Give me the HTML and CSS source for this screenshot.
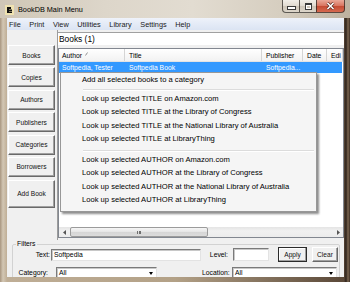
FILE: index.html
```html
<!DOCTYPE html>
<html lang="en">
<head>
    <meta charset="UTF-8">
    <meta name="viewport" content="width=device-width, initial-scale=1.0">
    <title>BookDB Main Menu</title>
    <link rel="stylesheet" href="styles.css">
</head>
<body>
<div class="window">
    <div class="titlebar">
        <svg class="app-icon" width="9" height="10" viewBox="0 0 9 10">
            <rect x="0" y="0" width="9" height="10" fill="#efe2b0"/>
            <rect x="2" y="2" width="2" height="6" fill="#111"/>
            <rect x="4" y="2" width="2" height="2" fill="#111"/>
            <rect x="4" y="4.5" width="3" height="1.5" fill="#111"/>
            <rect x="4" y="6.5" width="3" height="1.5" fill="#111"/>
        </svg>
        <span class="title">BookDB Main Menu</span>
        <div class="controls">
            <div class="ctl ctl-min"><span class="glyph-min"></span></div>
            <div class="ctl ctl-max"><span class="glyph-max"></span></div>
            <div class="ctl ctl-close">
                <svg width="9" height="8" viewBox="0 0 9 8">
                    <path d="M1.5 1 L7.5 7 M7.5 1 L1.5 7" stroke="#5a2a20" stroke-width="3"/>
                    <path d="M1.5 1 L7.5 7 M7.5 1 L1.5 7" stroke="#fff" stroke-width="1.6"/>
                </svg>
            </div>
        </div>
    </div>

    <div class="frame">
        <div class="menubar">
            <span>File</span>
            <span>Print</span>
            <span>View</span>
            <span>Utilities</span>
            <span>Library</span>
            <span>Settings</span>
            <span>Help</span>
        </div>

        <div class="client">
            <div class="main">
                <div class="side">
                    <button class="side-btn">Books</button>
                    <button class="side-btn">Copies</button>
                    <button class="side-btn">Authors</button>
                    <button class="side-btn">Publishers</button>
                    <button class="side-btn">Categories</button>
                    <button class="side-btn">Borrowers</button>
                    <button class="side-btn tall">Add Book</button>
                </div>

                <div class="pane">
                    <div class="caption">Books (1)</div>
                    <div class="list">
                        <div class="list-head">
                            <div class="col c-author">Author <svg class="sort" width="3" height="4" viewBox="0 0 3 4"><path d="M0.5 3.5 L2.5 0.5" stroke="#777" stroke-width="0.8"/></svg></div>
                            <div class="col c-title">Title</div>
                            <div class="col c-pub">Publisher</div>
                            <div class="col c-date">Date</div>
                            <div class="col c-edi">Edi</div>
                        </div>
                        <div class="row selected">
                            <div class="col c-author">Softpedia, Tester</div>
                            <div class="col c-title">Softpedia Book</div>
                            <div class="col c-pub">Softpedia...</div>
                            <div class="col c-date"></div>
                            <div class="col c-edi"></div>
                        </div>
                        <div class="list-body"></div>
                        <div class="hscroll">
                            <div class="sb-arrow"><svg width="3" height="5" viewBox="0 0 3 5"><path d="M3 0 L0 2.5 L3 5 Z" fill="#555"/></svg></div>
                            <div class="sb-thumb"><span class="grip"></span></div>
                            <div class="sb-track"></div>
                            <div class="sb-arrow"><svg width="3" height="5" viewBox="0 0 3 5"><path d="M0 0 L3 2.5 L0 5 Z" fill="#555"/></svg></div>
                        </div>
                    </div>
                </div>
            </div>

            <fieldset class="filters">
                <legend>Filters</legend>
                <div class="f-row">
                    <label class="lbl lbl-text">Text:</label>
                    <div class="field f-text">Softpedia</div>
                    <label class="lbl lbl-level">Level:</label>
                    <div class="field f-level"></div>
                    <button class="btn btn-apply">Apply</button>
                    <button class="btn btn-clear">Clear</button>
                </div>
                <div class="f-row row2">
                    <label class="lbl lbl-cat">Category:</label>
                    <div class="field combo f-cat">All<span class="drop"></span></div>
                    <label class="lbl lbl-loc">Location:</label>
                    <div class="field combo f-loc">All<span class="drop"></span></div>
                </div>
            </fieldset>
        </div>
    </div>

    <ul class="ctx-menu">
        <li>Add all selected books to a category</li>
        <li class="sep"></li>
        <li>Look up selected TITLE on Amazon.com</li>
        <li>Look up selected TITLE at the Library of Congress</li>
        <li>Look up selected TITLE at the National Library of Australia</li>
        <li>Look up selected TITLE at LibraryThing</li>
        <li class="sep sep-wide"></li>
        <li>Look up selected AUTHOR on Amazon.com</li>
        <li>Look up selected AUTHOR at the Library of Congress</li>
        <li>Look up selected AUTHOR at the National Library of Australia</li>
        <li>Look up selected AUTHOR at LibraryThing</li>
    </ul>
</div>
</body>
</html>
```

FILE: styles.css
```css
body {
    margin: 0;
    width: 350px;
    height: 282px;
    overflow: hidden;
    font-family: "Liberation Sans", Arial, sans-serif;
    color: #000;
}

.window {
    position: relative;
    height: 282px;
}

/* title bar */
.titlebar {
    height: 18px;
    display: flex;
    align-items: center;
    padding-left: 5px;
    background: linear-gradient(90deg, #cfc6b6 0, #ddd6ca 30%, #e2dcd1 55%, #d6cec0 80%, #bdb19f 100%);
}

.app-icon {
    margin-right: 4px;
    margin-top: 1px;
}

.title {
    font-size: 7.3px;
    margin-top: 1px;
}

.controls {
    margin-left: auto;
    margin-right: 5px;
    align-self: flex-start;
    display: flex;
}

.ctl {
    height: 13px;
    box-sizing: border-box;
    border: 1px solid rgba(45, 40, 35, 0.75);
    border-top: none;
    display: flex;
    align-items: center;
    justify-content: center;
    background: linear-gradient(#f1eee8, #e0dad0 50%, #cdc5b8 51%, #ddd6ca);
}

.ctl-min {
    width: 17px;
    border-right: none;
    border-radius: 0 0 0 4px;
}

.ctl-max {
    width: 17px;
    border-right: none;
}

.ctl-close {
    width: 29px;
    border-radius: 0 0 4px 0;
    background: linear-gradient(#eaa898, #d8735e 50%, #c44a32 51%, #d66a50);
}

.glyph-min {
    width: 7px;
    height: 2px;
    background: #fff;
    border: 1px solid #3a3a3a;
    margin-top: 4px;
}

.glyph-max {
    width: 5px;
    height: 4px;
    border: 1px solid #3a3a3a;
    border-top-width: 2px;
    box-shadow: inset 0 0 0 1px #fff;
}

/* frame around menu + client */
.frame {
    height: 264px;
    padding: 0 6px 5px 7px;
    box-sizing: border-box;
    background: linear-gradient(90deg, #a89680 0, #d3c7b4 3px, #bfae96 7px, #b3a187 50%, #5a4838 344px, #2e231b 346px, #7b6651 348px, #3b2d23 350px);
}

.menubar {
    height: 12px;
    display: flex;
    align-items: center;
    gap: 8.6px;
    padding-left: 2px;
    font-size: 7.3px;
    color: #1a1a1a;
    background: linear-gradient(#eef2fa, #dbe4f3);
}

.client {
    height: 247px;
    background: #f0f0f0;
    overflow: hidden;
}

.main {
    display: flex;
    height: 210px;
}

/* left button column */
.side {
    width: 50px;
    padding: 15px 0 0 1px;
    box-sizing: border-box;
    display: flex;
    flex-direction: column;
    gap: 2.4px;
}

.side-btn, .btn {
    font-family: "Liberation Sans", Arial, sans-serif;
    font-size: 6.6px;
    color: #111;
    background: #f0f0f0;
    border: 1px solid;
    border-color: #fff #696969 #696969 #fff;
    box-shadow: inset -1px -1px 0 #a0a0a0;
    padding: 0;
    margin: 0;
}

.side-btn {
    width: 47px;
    height: 20px;
}

.side-btn.tall {
    height: 28px;
    margin-top: 0.6px;
}

/* right pane */
.pane {
    flex: 1;
    border-left: 1px solid #9c9c9c;
    padding-top: 2px;
    display: flex;
    flex-direction: column;
}

.caption {
    height: 13px;
    box-sizing: border-box;
    background: #fff;
    border-top: 1px solid #a0a0a0;
    font-size: 8.4px;
    line-height: 12px;
    padding-left: 1px;
}

.list {
    margin-top: 3px;
    height: 190px;
    box-sizing: border-box;
    border: 1px solid #828790;
    background: #fff;
    display: flex;
    flex-direction: column;
}

.list-head {
    display: flex;
    height: 13px;
    box-sizing: border-box;
    border-bottom: 1px solid #e3e3e3;
    background: linear-gradient(#fff, #f2f2f2);
    font-size: 6.8px;
}

.col {
    box-sizing: border-box;
    padding-left: 4px;
    white-space: nowrap;
    overflow: hidden;
    display: flex;
    align-items: center;
}

.list-head .col {
    border-right: 1px solid #d5d5d5;
}

.c-author { width: 66px; padding-left: 3px; }
.c-title { width: 137px; }
.c-pub { width: 41px; }
.c-date { width: 24px; }
.c-edi { flex: 1; }

.sort {
    margin-left: 3px;
    margin-bottom: 2px;
}

.row {
    display: flex;
    height: 11px;
    font-size: 6.8px;
}

.row.selected {
    background: #3399ff;
    color: #fff;
    margin-right: 1px;
}

.list-body {
    flex: 1;
}

.hscroll {
    height: 10px;
    display: flex;
    background: linear-gradient(#e4e4e4, #f1f1f1 40%, #ececec);
}

.sb-arrow {
    width: 10px;
    display: flex;
    align-items: center;
    justify-content: center;
}

.sb-thumb {
    width: 138px;
    margin: 0 0 0 1px;
    box-sizing: border-box;
    border: 1px solid #9b9b9b;
    border-radius: 2px;
    background: linear-gradient(#f6f6f6, #e5e5e5 50%, #d6d6d6 51%, #dcdcdc);
    display: flex;
    align-items: center;
    justify-content: center;
}

.grip {
    width: 4px;
    height: 3px;
    background: repeating-linear-gradient(90deg, #6f6f6f 0, #6f6f6f 1px, transparent 1px, transparent 1.6px);
}

.sb-track {
    flex: 1;
}

/* filters group */
.filters {
    margin: 0 4px 0 5px;
    padding: 0;
    min-width: 0;
    border: 1px solid #d2d2d2;
    border-radius: 2px;
    height: 40px;
    font-size: 6.8px;
}

.filters legend {
    margin-left: 3px;
    padding: 0 1px;
    font-size: 6.8px;
    line-height: 8px;
}

.f-row {
    display: flex;
    align-items: center;
    height: 15px;
    margin-top: -1px;
}

.row2 {
    margin-top: 4px;
    height: 13px;
}

.lbl {
    text-align: right;
    display: block;
}

.lbl-text { width: 37px; }
.lbl-level { width: 20px; margin-left: 7px; }
.lbl-cat { width: 35px; }
.lbl-loc { width: 26px; margin-left: 45px; }

.field {
    height: 12px;
    box-sizing: border-box;
    background: #fff;
    border: 1px solid;
    border-color: #7a7a7a #e3e3e3 #e3e3e3 #7a7a7a;
    box-shadow: inset 1px 1px 0 #c8c8c8;
    line-height: 10px;
    padding-left: 2px;
}

.f-text { width: 150px; margin-left: 1px; }
.f-level { width: 36px; height: 13px; margin-left: 5px; }
.f-cat { width: 101px; margin-left: 8px; }
.f-loc { width: 105px; margin-left: 4px; }

.combo {
    position: relative;
}

.drop {
    position: absolute;
    right: 3px;
    top: 4px;
    border-left: 2.5px solid transparent;
    border-right: 2.5px solid transparent;
    border-top: 3px solid #000;
}

.btn {
    height: 15px;
}

.btn-apply {
    width: 29px;
    margin-left: 9px;
    outline: 1px solid #2b2b2b;
    outline-offset: -1px;
    border-color: #fff #696969 #696969 #fff;
    box-shadow: inset -1px -1px 0 #a0a0a0, inset 1px 1px 0 #fff;
}

.btn-clear {
    width: 26px;
    margin-left: 5px;
}

/* context menu */
.ctx-menu {
    position: absolute;
    left: 60px;
    top: 72px;
    width: 257px;
    margin: 0;
    padding: 0 0 4px 0;
    list-style: none;
    box-sizing: border-box;
    background: #f5f5f5;
    border: 1px solid #979797;
    box-shadow: 2px 2px 2px rgba(0, 0, 0, 0.45);
    font-size: 7.6px;
    color: #000;
}

.ctx-menu li {
    height: 13.5px;
    line-height: 13.5px;
    padding-left: 21px;
    white-space: nowrap;
}

.ctx-menu li.sep {
    height: 0;
    padding: 0;
    margin: 2px 2px 1px 22px;
    border-top: 1px solid #dcdcdc;
    border-bottom: 1px solid #fff;
}

.ctx-menu li.sep-wide {
    margin-top: 4px;
}
```
